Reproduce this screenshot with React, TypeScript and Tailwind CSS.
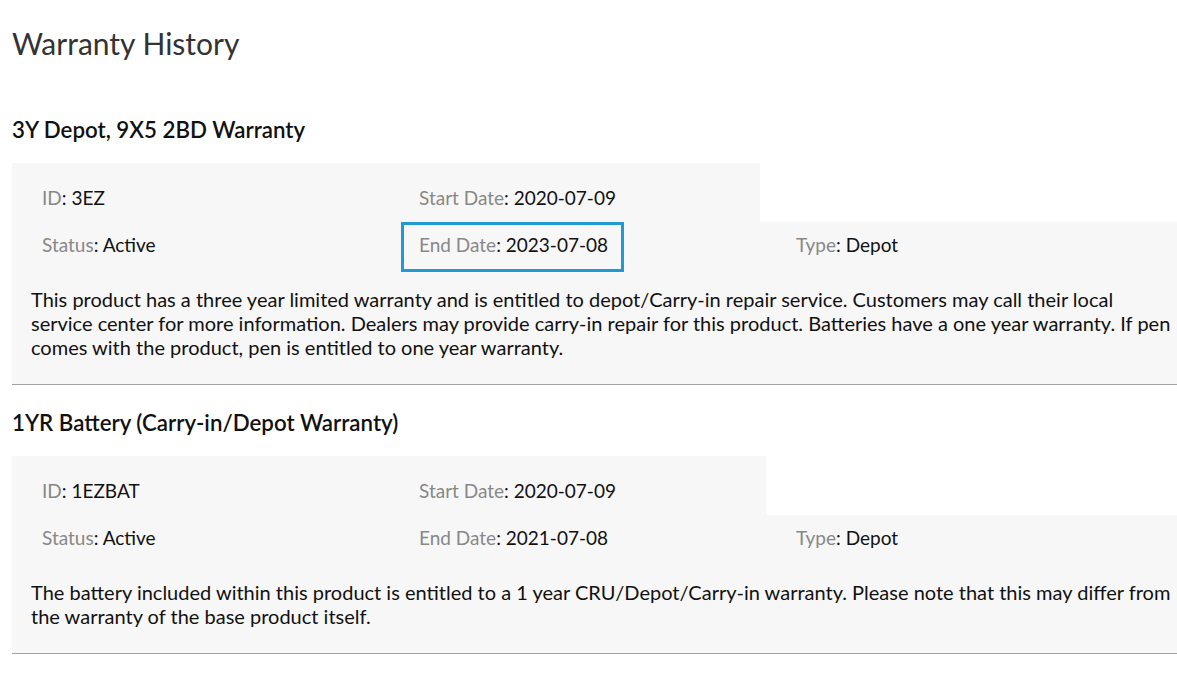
import React from 'react'

type Field = { label: string; value: string; highlight?: boolean }

type Warranty = {
  title: string
  topWidth: string
  top: Field[]
  bottom: Field[]
  description: string
}

const warranties: Warranty[] = [
  {
    title: '3Y Depot, 9X5 2BD Warranty',
    topWidth: 'w-[748px]',
    top: [
      { label: 'ID', value: '3EZ' },
      { label: 'Start Date', value: '2020-07-09' },
    ],
    bottom: [
      { label: 'Status', value: 'Active' },
      { label: 'End Date', value: '2023-07-08', highlight: true },
      { label: 'Type', value: 'Depot' },
    ],
    description:
      'This product has a three year limited warranty and is entitled to depot/Carry-in repair service. Customers may call their local service center for more information. Dealers may provide carry-in repair for this product. Batteries have a one year warranty. If pen comes with the product, pen is entitled to one year warranty.',
  },
  {
    title: '1YR Battery (Carry-in/Depot Warranty)',
    topWidth: 'w-[754px]',
    top: [
      { label: 'ID', value: '1EZBAT' },
      { label: 'Start Date', value: '2020-07-09' },
    ],
    bottom: [
      { label: 'Status', value: 'Active' },
      { label: 'End Date', value: '2021-07-08' },
      { label: 'Type', value: 'Depot' },
    ],
    description:
      'The battery included within this product is entitled to a 1 year CRU/Depot/Carry-in warranty. Please note that this may differ from the warranty of the base product itself.',
  },
]

function FieldText({ field }: { field: Field }) {
  return (
    <span className="whitespace-nowrap">
      <span className="text-[#888888]">{field.label}</span>
      <span className="text-[#111111]">: {field.value}</span>
    </span>
  )
}

function WarrantyCard({ w }: { w: Warranty }) {
  return (
    <section>
      <h2 className="text-[22.3px] leading-[24px] font-semibold text-[#111111] mb-[21px]">{w.title}</h2>
      <div className="border-b border-[#a3a3a3]">
        {/* first row: only as wide as its two columns */}
        <div className={`${w.topWidth} h-[59px] bg-[#f7f7f7] flex pl-[30px] pt-[24px]`}>
          {w.top.map((f) => (
            <div key={f.label} className="w-[377px] shrink-0 leading-[22px]">
              <FieldText field={f} />
            </div>
          ))}
        </div>
        <div className="bg-[#f7f7f7]">
          <div className="flex pl-[12px]">
            {w.bottom.map((f) => (
              <div key={f.label} className="w-[377px] shrink-0">
                <div
                  className={`inline-block border-[3px] pl-[15px] pr-[13px] pt-[9px] pb-[13px] leading-[22px] ${
                    f.highlight ? 'border-[#1f9ad2]' : 'border-transparent'
                  }`}
                >
                  <FieldText field={f} />
                </div>
              </div>
            ))}
          </div>
          <p className="pl-[19px] pr-[4px] pt-[15px] pb-[25px] text-[20px] leading-[24px] text-[#111111]">
            {w.description}
          </p>
        </div>
      </div>
    </section>
  )
}

export default function App() {
  return (
    <div
      className="min-h-screen bg-white pl-[12px] text-[19px]"
      style={{ fontFamily: 'Lato, "Noto Sans", sans-serif' }}
    >
      <h1 className="pt-[26px] text-[30px] leading-[34px] text-[#333333] mb-[58px]">Warranty History</h1>
      <div className="flex flex-col gap-[26px]">
        {warranties.map((w) => (
          <WarrantyCard key={w.title} w={w} />
        ))}
      </div>
    </div>
  )
}
